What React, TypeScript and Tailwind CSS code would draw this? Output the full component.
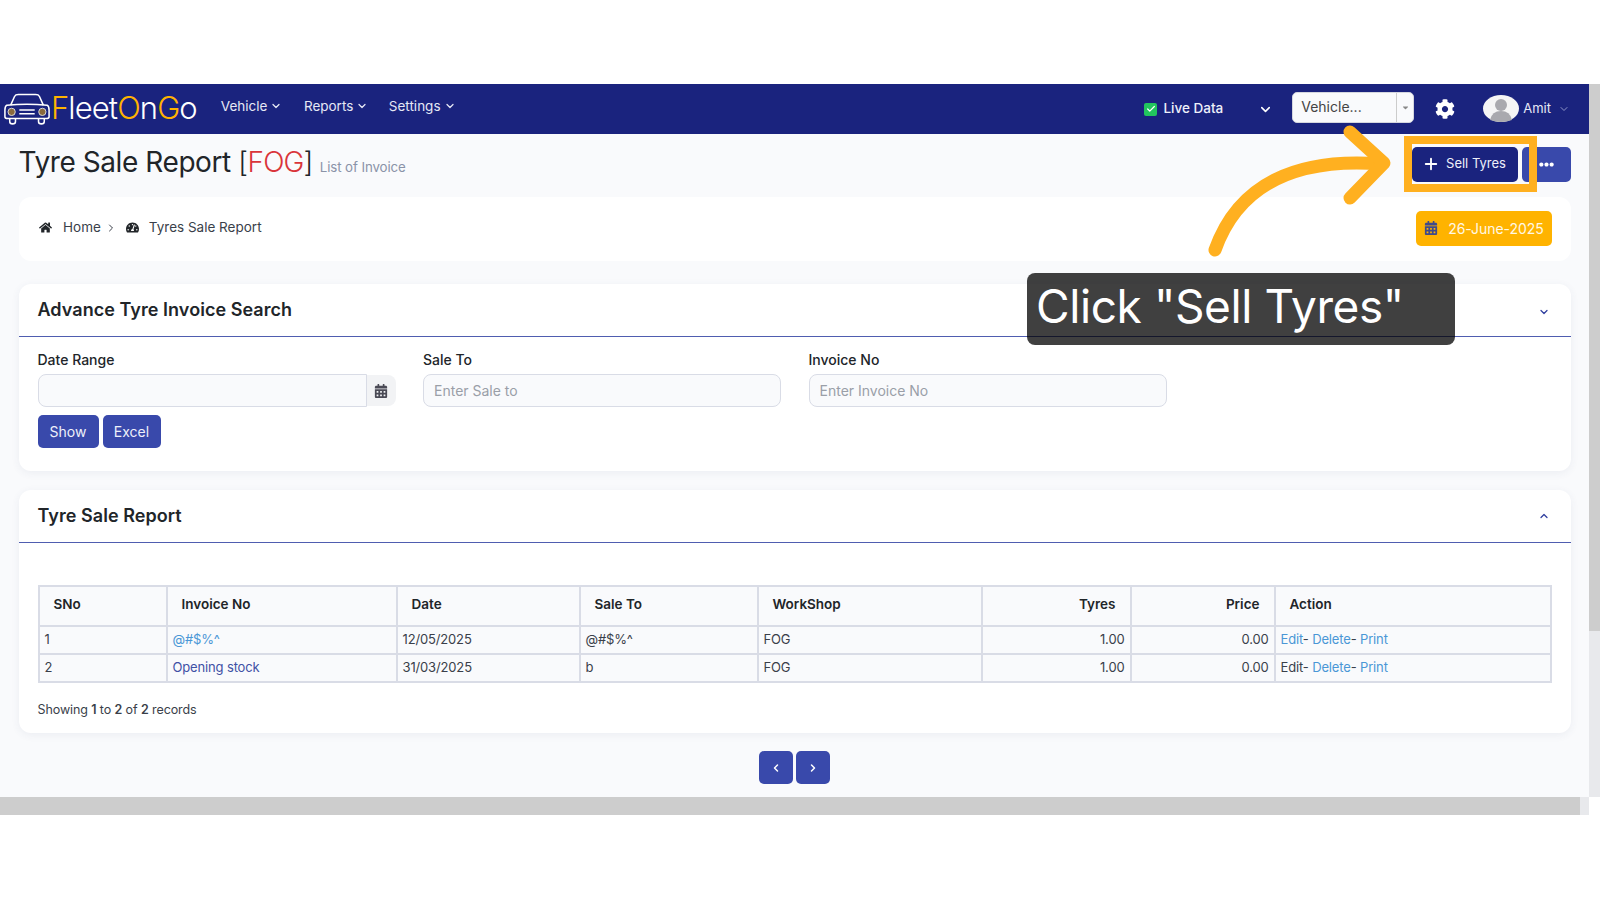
import { ChevronDown, ChevronUp, ChevronLeft, ChevronRight, Plus, Check } from "lucide-react";
import { FaHome, FaCalendarAlt, FaCog, FaTachometerAlt, FaEllipsisH, FaCaretDown } from "react-icons/fa";

function Logo() {
  return (
    <div className="flex items-center">
      <svg width="48" height="34" viewBox="0 0 50 34" fill="none" stroke="#fff" strokeWidth="1.6" className="ml-[3px]">
        <path d="M8 13 L12 4 Q13 2 16 2 H34 Q37 2 38 4 L42 13" />
        <path d="M4 13 Q2 14 2 18 V25 Q2 27 5 27 H45 Q48 27 48 25 V18 Q48 14 46 13 Q25 11 4 13 Z" />
        <path d="M17 18 H33 M17 22 H33" />
        <path d="M7 27 V30 Q7 32.500 10 32.500 Q13 32.500 13 30 V27 M37 27 V30 Q37 32.500 40 32.500 Q43 32.500 43 30 V27" />
        <circle cx="9" cy="20" r="3.800" fill="#8a6a3c" stroke="#ddd" strokeWidth="1" />
        <circle cx="41" cy="20" r="3.800" fill="#8a6a3c" stroke="#ddd" strokeWidth="1" />
      </svg>
      <span className="-mt-[3px] text-[31px] font-light leading-none tracking-[-0.9px] text-white">
        <span className="text-[#ffb300]">F</span>leet<span className="text-[#ffb300]">O</span>n<span className="text-[#ffb300]">G</span>o
      </span>
    </div>
  );
}

function NavItem({ label, className }: { label: string; className: string }) {
  return (
    <div className={`flex items-center gap-[3px] text-[13.5px] text-[#e6e8f5] ${className}`}>
      {label}
      <ChevronDown size={12} strokeWidth={2.5} />
    </div>
  );
}

function Card({ title, open, children }: { title: string; open: boolean; children: React.ReactNode }) {
  return (
    <section className="ml-[19px] mr-[18px] rounded-[12px] bg-white shadow-[0_2px_8px_rgba(60,70,110,0.07)]">
      <div className="flex h-[53px] items-center justify-between border-b border-[#4f5db0] pl-[18.5px] pr-[21px]">
        <h2 className="pb-[2px] text-[18px] font-semibold tracking-[0.05px] text-[#212529]">{title}</h2>
        {open ? <ChevronUp size={12} className="text-[#303f9f]" strokeWidth={2.5} /> : <ChevronDown size={12} className="mt-[3px] text-[#303f9f]" strokeWidth={2.5} />}
      </div>
      {children}
    </section>
  );
}

const thCls = "border-2 border-[#d9dce6] px-[14px] pb-[3px] text-[13.5px] font-semibold text-[#212529]";
const tdCls = "border-2 border-[#d9dce6] px-[5px] text-[13px] tracking-[-0.15px] text-[#3a3f4a]";

function Row({ n, inv, invBlue, date, to, editBlue }: { n: string; inv: string; invBlue: boolean; date: string; to: string; editBlue: boolean }) {
  return (
    <tr className="h-[28px]">
      <td className={tdCls}>{n}</td>
      <td className={`${tdCls} ${invBlue ? "!text-[#4a97d6]" : "!text-[#3f51a5]"}`}>{inv}</td>
      <td className={tdCls}>{date}</td>
      <td className={tdCls}>{to}</td>
      <td className={tdCls}>FOG</td>
      <td className={`${tdCls} text-right`}>1.00</td>
      <td className={`${tdCls} text-right`}>0.00</td>
      <td className={tdCls}>
        <span className={editBlue ? "text-[#4a97d6]" : ""}>Edit</span>- <span className="text-[#4a97d6]">Delete</span>- <span className="text-[#4a97d6]">Print</span>
      </td>
    </tr>
  );
}

export default function App() {
  return (
    <div className="relative h-[900px] w-[1600px] overflow-hidden bg-white [font-family:Inter,'Liberation_Sans',sans-serif]">
      <div className="h-[84px]" />
      <div className="flex h-[731px]">
        <div className="flex w-[1589px] flex-col bg-[#f9fafc]">
          <header className="flex h-[50px] items-center bg-[#1a237e]">
            <Logo />
            <NavItem label="Vehicle" className="ml-[24px] -mt-[6px]" />
            <NavItem label="Reports" className="ml-[21.5px] -mt-[6px]" />
            <NavItem label="Settings" className="ml-[20.5px] -mt-[6px]" />
            <div className="ml-auto flex items-center">
              <span className="flex h-[13px] w-[13px] items-center justify-center rounded-[2px] bg-[#22c55e]"><Check size={10} strokeWidth={3} className="text-white" /></span>
              <span className="ml-[6px] -mt-[1px] text-[13.5px] font-medium text-[#eef0fa]">Live Data</span>
              <ChevronDown size={15} strokeWidth={2.5} className="ml-[35px] text-white" />
              <div className="ml-[19px] flex h-[31px] w-[122px] -translate-y-[2px] items-center justify-between rounded-[5px] border border-[#d5d7df] bg-[#f9fafc] text-[14px] text-[#444]">
                <span className="-mt-[1px] pl-[8px]">Vehicle...</span>
                <span className="flex h-full w-[17px] items-center justify-center border-l border-[#ccc]"><FaCaretDown size={9} className="text-[#888]" /></span>
              </div>
              <FaCog size={20} className="ml-[21px] text-white" />
              <svg width="36" height="27" viewBox="0 0 36 27" className="ml-[28px] -translate-y-[1px]">
                <ellipse cx="18" cy="13.500" rx="18" ry="13.500" fill="#f5f5f5" />
                <circle cx="18" cy="10" r="6" fill="#a9a9ae" />
                <path d="M7 25 Q9 16 18 16 Q27 16 29 25 Q18 29 7 25 Z" fill="#a9a9ae" />
              </svg>
              <span className="ml-[4px] text-[13px] text-[#e6e8f5]">Amit</span>
              <ChevronDown size={12} className="ml-[7px] mr-[19px] text-[#8f96c8]" />
            </div>
          </header>

          <div className="flex h-[63px] items-start justify-between pl-[18.5px] pr-[18px] pt-[13px]">
            <div className="-mt-[1px] flex items-baseline">
              <h1 className="text-[28px] font-normal leading-[32px] tracking-[-0.42px] text-[#212529]">
                Tyre Sale Report <span className="font-light">[<span className="tracking-[-0.9px] text-[#d9343a]">FOG</span>]</span>
              </h1>
              <span className="ml-[7px] text-[13.3px] tracking-[-0.1px] text-[#8a93a8]">List of Invoice</span>
            </div>
            <div className="flex gap-[4px]">
              <button className="flex h-[35px] w-[106px] items-center justify-center gap-[6px] rounded-[5px] bg-[#1a237e] pb-[1px] pr-[2px] text-[13px] text-[#eef0fa]">
                <Plus size={18} strokeWidth={2.5} className="text-white" />
                Sell Tyres
              </button>
              <button className="flex h-[35px] w-[49px] items-center justify-center rounded-[5px] bg-[#3949ab] text-white">
                <FaEllipsisH size={15} />
              </button>
            </div>
          </div>

          <div className="ml-[19px] mr-[18px] flex h-[64px] items-center justify-between rounded-[12px] bg-white pb-[2px] pl-[20px] pr-[19px]">
            <div className="-mt-[1px] flex items-center text-[13.5px] text-[#3a3f4a]">
              <FaHome size={13} className="text-[#212529]" />
              <span className="ml-[11px]">Home</span>
              <ChevronRight size={12} className="ml-[4px]" />
              <FaTachometerAlt size={13} className="ml-[9px] text-[#212529]" />
              <span className="ml-[10px]">Tyres Sale Report</span>
            </div>
            <div className="flex h-[35px] w-[136px] items-center justify-center gap-[10px] rounded-[5px] bg-[#ffb300] text-[14px] tracking-[-0.05px] text-[#fff8e6]">
              <FaCalendarAlt size={14} className="text-[#3f4a8a]" />
              26-June-2025
            </div>
          </div>

          <div className="h-[23px] shrink-0" />
          <Card title="Advance Tyre Invoice Search" open={false}>
            <div className="grid grid-cols-[358px_358px_358px] gap-x-[27.5px] px-[18.5px] pt-[13px]">
              {[
                ["Date Range", ""],
                ["Sale To", "Enter Sale to"],
                ["Invoice No", "Enter Invoice No"],
              ].map(([label, ph], i) => (
                <div key={label}>
                  <div className="mb-[4px] text-[14px] font-medium leading-[20px] text-[#212529]">{label}</div>
                  <div className="flex">
                    <div className={`flex h-[33px] flex-1 items-center rounded-[8px] border border-[#d9dce6] bg-[#f9fafc] pl-[10px] text-[14px] text-[#9a9fa8] ${i === 0 ? "rounded-r-none" : ""}`}>{ph}</div>
                    {i === 0 && (
                      <div className="flex h-[31px] w-[29px] items-center justify-center self-center rounded-r-[8px] bg-[#f2f3f5]">
                        <FaCalendarAlt size={14} className="text-[#4a4a55]" />
                      </div>
                    )}
                  </div>
                </div>
              ))}
            </div>
            <div className="flex gap-[4px] px-[18.5px] pb-[23px] pt-[8px]">
              <button className="h-[33px] w-[61px] rounded-[5px] bg-[#3949ab] text-[14px] text-[#eef0fa]">Show</button>
              <button className="h-[33px] w-[58px] rounded-[5px] bg-[#3949ab] text-[14px] text-[#eef0fa]">Excel</button>
            </div>
          </Card>

          <div className="h-[19px] shrink-0" />
          <Card title="Tyre Sale Report" open>
            <div className="px-[18.5px] pb-[13px] pt-[42px]">
              <table className="w-[1514.5px] table-fixed border-collapse bg-[#f9fafc]">
                <colgroup>
                  <col className="w-[128px]" />
                  <col className="w-[230px]" />
                  <col className="w-[183px]" />
                  <col className="w-[178px]" />
                  <col className="w-[224px]" />
                  <col className="w-[149px]" />
                  <col className="w-[144px]" />
                  <col />
                </colgroup>
                <thead>
                  <tr className="h-[40px] text-left">
                    <th className={thCls}>SNo</th>
                    <th className={thCls}>Invoice No</th>
                    <th className={thCls}>Date</th>
                    <th className={thCls}>Sale To</th>
                    <th className={thCls}>WorkShop</th>
                    <th className={`${thCls} text-right`}>Tyres</th>
                    <th className={`${thCls} text-right`}>Price</th>
                    <th className={thCls}>Action</th>
                  </tr>
                </thead>
                <tbody>
                  <Row n="1" inv="@#$%^" invBlue date="12/05/2025" to="@#$%^" editBlue />
                  <Row n="2" inv="Opening stock" invBlue={false} date="31/03/2025" to="b" editBlue={false} />
                </tbody>
              </table>
              <div className="mt-[17px] text-[12.5px] leading-[20px] tracking-[-0.1px] text-[#3a3f4a]">
                Showing <b className="font-semibold">1</b> to <b className="font-semibold">2</b> of <b className="font-semibold">2</b> records
              </div>
            </div>
          </Card>

          <div className="flex flex-1 justify-center gap-[3px] pt-[18px]">
            <button className="flex h-[33px] w-[34px] items-center justify-center rounded-[5px] bg-[#3949ab] text-white"><ChevronLeft size={12} strokeWidth={3} /></button>
            <button className="flex h-[33px] w-[34px] items-center justify-center rounded-[5px] bg-[#3949ab] text-white"><ChevronRight size={12} strokeWidth={3} /></button>
          </div>

          <div className="flex h-[18px] shrink-0 bg-[#e8e9ec]">
            <div className="h-full w-[1580px] bg-[#cdcdcd]" />
          </div>
        </div>

        <div className="flex h-[713px] w-[11px] flex-col bg-[#e8e9ec]">
          <div className="h-[547px] bg-[#cdcdcd]" />
        </div>
      </div>

      {/* Tutorial overlay: highlight, arrow, callout */}
      <div className="absolute left-[1404px] top-[136px] h-[56px] w-[133px] border-[8px] border-[#ffb020]" />
      <svg className="absolute left-[1190px] top-[120px]" width="220" height="150" viewBox="1190 120 220 150" fill="none" stroke="#ffb020" strokeWidth="13" strokeLinecap="round" strokeLinejoin="round">
        <path d="M1215 250 C1238 185 1295 157 1382 164" />
        <path d="M1350 132 L1384 163 L1350 198" />
      </svg>
      <div className="absolute left-[1027px] top-[273px] flex h-[72px] w-[428px] items-center rounded-[8px] bg-black/75 pb-[6px] pl-[9px] text-[46px] leading-none tracking-[-0.4px] text-white">
        Click "Sell Tyres"
      </div>
    </div>
  );
}
